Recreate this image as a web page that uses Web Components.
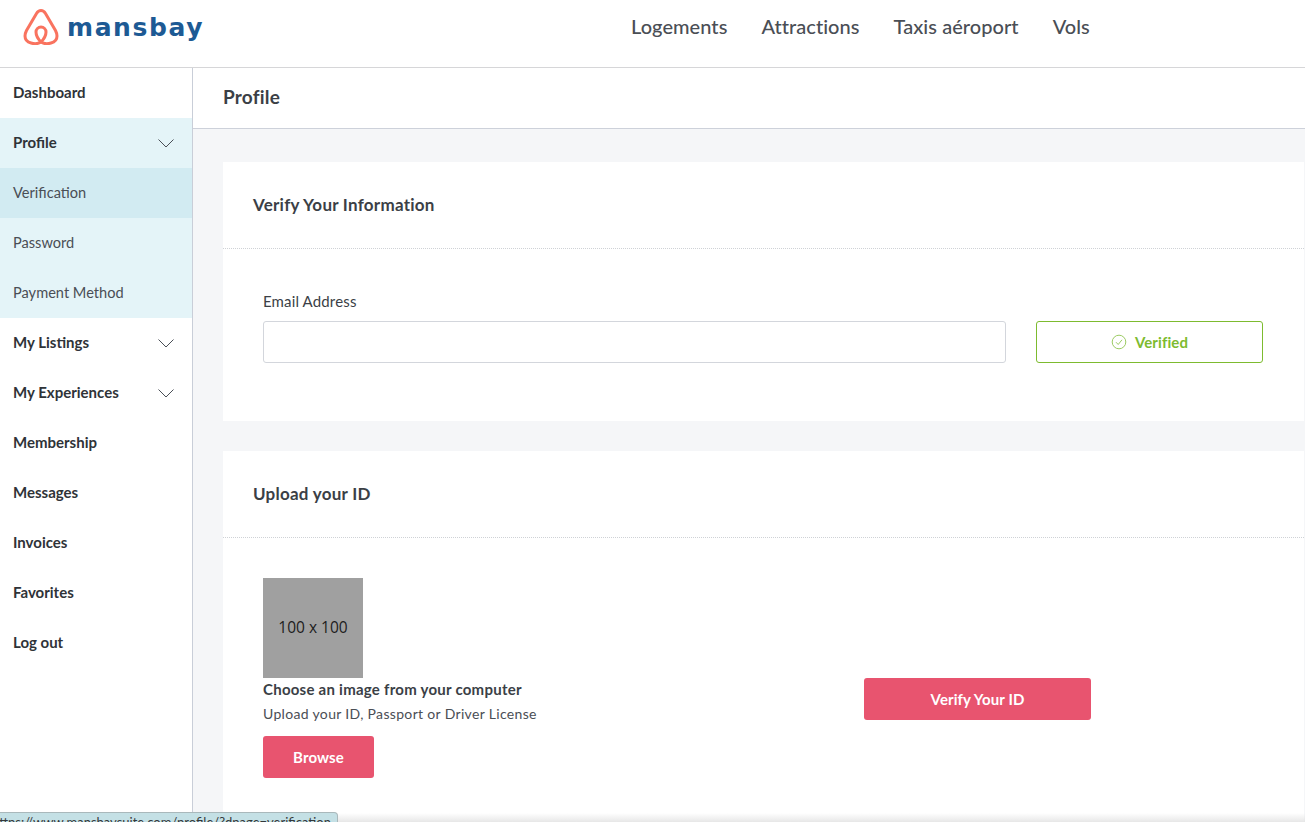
<!DOCTYPE html>
<html lang="en">
<head>
<meta charset="utf-8">
<title>Profile</title>
<style>
    html, body {
        margin: 0;
        height: 100%;
        overflow: hidden;
        background: #fff;
        font-family: Lato, "Open Sans", sans-serif;
        color: #3b3f46;
    }
</style>
</head>
<body>
<app-shell></app-shell>
<script>
const chevron = `<svg width="16" height="9" viewBox="0 0 16 9" fill="none" stroke="#4a4f57" stroke-width="1"><path d="M.5.5 8 8 15.5.5"/></svg>`;

class TopBar extends HTMLElement {
    constructor() {
        super();
        this.attachShadow({ mode: 'open' });
        this.shadowRoot.innerHTML = `
            <style>
                :host {
                    display: flex;
                    height: 67px;
                    border-bottom: 1px solid #d6d6d8;
                    box-sizing: content-box;
                    background: #fff;
                }
                .logo {
                    display: flex;
                    align-items: center;
                    gap: 8px;
                    padding: 0 0 13px 23px;
                    width: 600px;
                    box-sizing: border-box;
                }
                .word {
                    color: #1d5a94;
                    font: 700 25px/1 "DejaVu Sans", sans-serif;
                    letter-spacing: 1.6px;
                }
                nav {
                    display: flex;
                    gap: 34px;
                    padding: 16px 0 0 31px;
                    font: 500 20px/20px Lato, sans-serif;
                    letter-spacing: .05px;
                    color: #4a4e55;
                }
            </style>
            <div class="logo">
                <svg width="36" height="36" viewBox="0 0 36 36" fill="none" stroke="#f9735f" stroke-width="3" stroke-linecap="round" stroke-linejoin="round">
                    <path d="M18 33c-3 2-7 2-10 1-4-1-6-4-6-7 0-2 .5-3.500 1.500-5.500L13.500 4.500C15 2 16.500 1.500 18 1.500s3 .5 4.500 3l10 17c1 2 1.500 3.500 1.500 5.500 0 3-2 6-6 7-3 1-7 1-10-1z"/>
                    <path d="M18 33c-2-2-5-6-5-10a5 5 0 0 1 10 0c0 4-3 8-5 10z"/>
                </svg>
                <span class="word">mansbay</span>
            </div>
            <nav>
                <span>Logements</span>
                <span>Attractions</span>
                <span>Taxis aéroport</span>
                <span>Vols</span>
            </nav>`;
    }
}

class SideItem extends HTMLElement {
    constructor() {
        super();
        this.attachShadow({ mode: 'open' });
        this.shadowRoot.innerHTML = `
            <style>
                :host {
                    display: flex;
                    align-items: center;
                    justify-content: space-between;
                    height: 50px;
                    padding: 0 18px 0 13px;
                    font-size: 15px;
                    font-weight: 700;
                    color: #2f3338;
                }
                span { padding-bottom: 2px; }
                :host([sub]) {
                    font-size: 14.6px;
                    font-weight: 400;
                    background: #e4f4f8;
                    color: #4a4e55;
                }
                :host([open]) { background: #e4f4f8; }
                :host([current]) { background: #d2ebf2; }
                svg { display: none; }
                :host([arrow]) svg { display: block; }
            </style>
            <span><slot></slot></span>
            ${chevron}`;
    }
}

class SideBar extends HTMLElement {
    constructor() {
        super();
        this.attachShadow({ mode: 'open' });
        this.shadowRoot.innerHTML = `
            <style>
                :host {
                    display: block;
                    width: 192px;
                    border-right: 1px solid #c9ced8;
                    background: #fff;
                }
            </style>
            <slot></slot>`;
    }
}

class InfoCard extends HTMLElement {
    constructor() {
        super();
        this.attachShadow({ mode: 'open' });
        this.shadowRoot.innerHTML = `
            <style>
                :host {
                    display: block;
                    background: #fff;
                }
                h3 {
                    margin: 0;
                    height: 86px;
                    box-sizing: content-box;
                    padding: 0 30px;
                    display: flex;
                    align-items: center;
                    font-size: 17px;
                    letter-spacing: .25px;
                    font-weight: 700;
                    color: #3b3f46;
                    border-bottom: 1px dotted #cfd2d6;
                }
                h3 span { padding-bottom: 2px; }
            </style>
            <h3><span>${this.getAttribute('heading')}</span></h3>
            <slot></slot>`;
    }
}

class ActionButton extends HTMLElement {
    constructor() {
        super();
        this.attachShadow({ mode: 'open' });
        this.shadowRoot.innerHTML = `
            <style>
                :host {
                    display: flex;
                    align-items: center;
                    justify-content: center;
                    gap: 8px;
                    height: 42px;
                    box-sizing: border-box;
                    border-radius: 3px;
                    background: #e8546f;
                    color: #fff;
                    font-size: 15px;
                    font-weight: 700;
                    letter-spacing: .1px;
                }
                :host([outline]) {
                    background: #fff;
                    border: 1px solid #7dbb2f;
                    color: #7dbb2f;
                }
            </style>
            <slot></slot>`;
    }
}

class AppShell extends HTMLElement {
    constructor() {
        super();
        this.attachShadow({ mode: 'open' });
        this.shadowRoot.innerHTML = `
            <style>
                :host {
                    display: flex;
                    flex-direction: column;
                    height: 100vh;
                    position: relative;
                    overflow: hidden;
                }
                .body { flex: 1; display: flex; min-height: 0; }
                main {
                    flex: 1;
                    background: #f5f6f8;
                    min-width: 0;
                }
                .title {
                    height: 61px;
                    box-sizing: border-box;
                    background: #fff;
                    border-bottom: 1px solid #cdd1da;
                    padding: 0 0 3px 30px;
                    display: flex;
                    align-items: center;
                    font-size: 19px;
                    letter-spacing: .2px;
                    font-weight: 700;
                    color: #3b3f46;
                }
                .cards {
                    display: flex;
                    flex-direction: column;
                    gap: 30px;
                    padding: 33px 1px 0 30px;
                }
                .email {
                    display: grid;
                    grid-template-columns: 743px 227px;
                    column-gap: 30px;
                    align-items: end;
                    padding: 43px 0 58px 40px;
                }
                label { display: block; font-size: 15px; letter-spacing: .15px; line-height: 17px; padding-top: 1px; margin-bottom: 11px; color: #3b3f46; }
                .input {
                    height: 42px;
                    box-sizing: border-box;
                    border: 1px solid #d3d6dc;
                    border-radius: 3px;
                    background: #fff;
                }
                .upload {
                    display: grid;
                    grid-template-columns: 601px 227px;
                    padding: 40px 0 60px 40px;
                }
                .verify { align-self: start; margin-top: 100px; }
                .thumb {
                    width: 100px;
                    height: 100px;
                    background: #a0a0a0;
                    display: flex;
                    align-items: center;
                    justify-content: center;
                    color: #1c1c1c;
                    font: 15.500px/1 "Open Sans", sans-serif;
                }
                .choose { font-size: 15px; letter-spacing: .25px; font-weight: 700; line-height: 22px; margin-bottom: 2px; color: #3b3f46; }
                .hint { font-size: 14px; letter-spacing: .33px; line-height: 24px; margin-bottom: 10px; color: #4a4e55; }
                .browse { width: 111px; }
                .fade {
                    position: absolute;
                    left: 0; right: 0; bottom: 0;
                    height: 9px;
                    background: linear-gradient(rgba(235,235,235,0), rgba(225,225,225,.8));
                }
                .status {
                    position: absolute;
                    left: 0;
                    top: 812px;
                    width: 338px;
                    height: 20px;
                    box-sizing: border-box;
                    padding-top: 2px;
                    background: #c4e0e5;
                    border: 1px solid #a9b8bb;
                    border-left: 0;
                    border-radius: 0 4px 0 0;
                    font: 13px/15px Lato, sans-serif;
                    color: #33383a;
                    white-space: nowrap;
                    overflow: hidden;
                    text-indent: -8px;
                }
            </style>
            <top-bar></top-bar>
            <div class="body">
                <side-bar>
                    <side-item>Dashboard</side-item>
                    <side-item open arrow>Profile</side-item>
                    <side-item sub current>Verification</side-item>
                    <side-item sub>Password</side-item>
                    <side-item sub>Payment Method</side-item>
                    <side-item arrow>My Listings</side-item>
                    <side-item arrow>My Experiences</side-item>
                    <side-item>Membership</side-item>
                    <side-item>Messages</side-item>
                    <side-item>Invoices</side-item>
                    <side-item>Favorites</side-item>
                    <side-item>Log out</side-item>
                </side-bar>
                <main>
                    <div class="title">Profile</div>
                    <div class="cards">
                        <info-card heading="Verify Your Information">
                            <div class="email">
                                <div>
                                    <label>Email Address</label>
                                    <div class="input"></div>
                                </div>
                                <action-button outline>
                                    <svg width="16" height="16" viewBox="0 0 16 16" fill="none" stroke="#9ccb63" stroke-width="1"><circle cx="8" cy="8" r="6.800"/><path d="M5 8.200 7.200 10.500 11 5.800"/></svg>
                                    Verified
                                </action-button>
                            </div>
                        </info-card>
                        <info-card heading="Upload your ID">
                            <div class="upload">
                                <div>
                                    <div class="thumb">100 x 100</div>
                                    <div class="choose">Choose an image from your computer</div>
                                    <div class="hint">Upload your ID, Passport or Driver License</div>
                                    <action-button class="browse">Browse</action-button>
                                </div>
                                <action-button class="verify">Verify Your ID</action-button>
                            </div>
                        </info-card>
                    </div>
                </main>
            </div>
            <div class="fade"></div>
            <div class="status">https://www.mansbaysuite.com/profile/?dpage=verification</div>`;
    }
}

customElements.define('top-bar', TopBar);
customElements.define('side-item', SideItem);
customElements.define('side-bar', SideBar);
customElements.define('info-card', InfoCard);
customElements.define('action-button', ActionButton);
customElements.define('app-shell', AppShell);
</script>
</body>
</html>
